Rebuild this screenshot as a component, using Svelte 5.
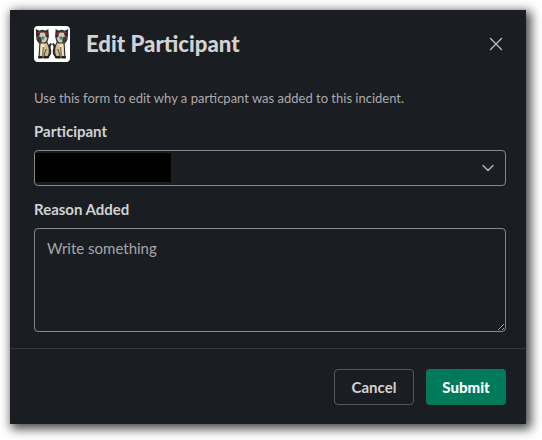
<script>
  let reason = $state('');
</script>

{#snippet cat()}
  <path d="M6 16 L12.500 15.500 Q16 21 15.300 26 L14.500 31.500 H5 L5.500 24Z" fill="#cdbd93" stroke="#2f2925" stroke-width="1.100" />
  <path d="M7 17 L11 18 L10 25 L8.500 30 H6.500 L6.500 23Z" fill="#f1e2bd" />
  <path d="M2.500 4 L6 6 H10.500 L13.800 4 L14.200 10 Q14 15 11 17 H6 Q2.800 15 2.800 11Z" fill="#d8c9a2" stroke="#2b2624" stroke-width="1.200" />
  <path d="M2.500 4 L6.500 6 L5 10.500 L3 11Z M13.800 4 L10.500 6 L12 11.500 L14.200 11Z" fill="#312b2a" />
  <path d="M3.500 7.500 Q8 2 13.500 7.500" fill="none" stroke="#2c2e38" stroke-width="2.200" />
  <path d="M4 7 L6.500 5.500 M11.500 6 L13 9" stroke="#ac3044" stroke-width="1.400" />
  <path d="M3.500 11 Q6.500 9.500 7.700 13 L7.700 16.700 H5 Q2.800 15 3.500 11Z" fill="#413936" />
  <circle cx="8.900" cy="12" r="1.700" fill="#288eb4" />
  <path d="M9.300 21 L8.700 31 M12.300 23 L10.700 27 V31" fill="none" stroke="#51453a" stroke-width="1" />
  <path d="M4.200 30 H8.200 V32.500 H4.200Z M9.500 30 H14.300 V32.500 H9.500Z" fill="#262220" />
  <path d="M14 30.500 Q17.400 28 16 23 Q15 19 17.400 17.600" fill="none" stroke="#2b2725" stroke-width="1.800" />
{/snippet}

<div class="page">
  <section class="dialog" role="dialog" aria-labelledby="title">
    <header>
      <svg class="avatar" width="36" height="36" viewBox="0 0 36 36" aria-hidden="true">
        <rect width="36" height="36" rx="4" fill="#fff" />
        <g>{@render cat()}</g>
        <g transform="translate(36 0) scale(-1 1)">{@render cat()}</g>
      </svg>
      <h1 id="title">Edit Participant</h1>
      <button class="close" aria-label="Close">
        <svg width="14" height="14" viewBox="0 0 14 14"><path d="M1.500 1.500 L12.500 12.500 M12.500 1.500 L1.500 12.500" /></svg>
      </button>
    </header>
    <main>
      <p>Use this form to edit why a particpant was added to this incident.</p>
      <div class="label">Participant</div>
      <button class="select" aria-label="Participant">
        <span class="redacted"></span>
        <svg width="14" height="10" viewBox="0 0 14 10"><path d="M2 2.500 L7 7.500 L12 2.500" /></svg>
      </button>
      <label class="label second" for="reason">Reason Added</label>
      <textarea id="reason" placeholder="Write something" bind:value={reason}></textarea>
    </main>
    <footer>
      <button class="cancel">Cancel</button>
      <button class="submit">Submit</button>
    </footer>
  </section>
</div>

<style>
  :global(body) { background: #fff; }
  .page, .page * { box-sizing: border-box; }
  .page { width: 542px; height: 440px; padding: 10px; overflow: hidden; font-family: Lato, sans-serif; }
  .dialog {
    width: 516px; height: 414px; display: flex; flex-direction: column;
    background: #1a1d21; color: #d1d2d3; box-shadow: 3px 3px 10px 2px rgba(0, 0, 0, .72);
  }
  header { height: 68px; display: flex; align-items: center; padding: 0 20px 0 24px; flex: none; }
  .avatar { flex: none; }
  h1 { margin: 0 0 0 16px; font-size: 22.2px; line-height: 30px; font-weight: 900; }
  button { font-family: inherit; padding: 0; background: none; border: 0; }
  .close { margin-left: auto; width: 20px; height: 20px; display: grid; place-items: center; }
  svg { display: block; }
  .close path, .select path { fill: none; stroke: #b9babb; stroke-width: 1.4; stroke-linecap: round; stroke-linejoin: round; }
  main { flex: 1; padding: 11px 20px 0 24px; }
  p { margin: 0; font-size: 13px; line-height: 18px; color: #ababad; }
  .label { display: block; margin-top: 13px; font-size: 15px; line-height: 22px; font-weight: 700; }
  .select {
    width: 472px; height: 36px; margin-top: 8px; display: flex; align-items: center; justify-content: space-between;
    border: 1px solid #868789; border-radius: 4px; padding: 0 10px 0 0;
  }
  .redacted { width: 135.5px; height: 29px; background: #000; margin-bottom: 2px; }
  .label.second { margin-top: 12px; }
  textarea {
    display: block; width: 472px; height: 104px; margin-top: 8px; padding: 8px 12px; resize: vertical;
    background: transparent; color: #d1d2d3; color-scheme: dark; border: 1px solid #868789; border-radius: 4px;
    font: 15px/22px Lato, sans-serif; outline: none;
  }
  textarea::placeholder { color: #a6a7a9; opacity: 1; }
  footer { height: 76px; flex: none; border-top: 1px solid #35373b; display: flex; justify-content: flex-end; gap: 12px; padding: 20px 20px 0; }
  footer button { width: 80px; height: 36px; border-radius: 4px; font-size: 15px; font-weight: 700; color: #d1d2d3; }
  .cancel { border: 1px solid #56585b; }
  .submit { background: #007a5a; color: #fff; font-weight: 900; }
</style>
